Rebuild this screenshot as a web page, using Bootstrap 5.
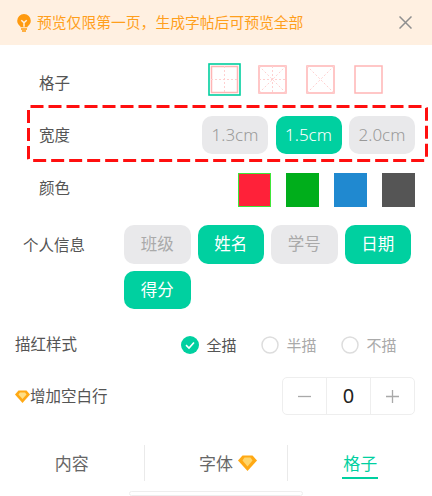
<!DOCTYPE html>
<html lang="zh">
<head>
<meta charset="utf-8">
<title>格子</title>
<link href="https://cdn.jsdelivr.net/npm/bootstrap@5.3.0/dist/css/bootstrap.min.css" rel="stylesheet">
<style>
html,body{height:496px;overflow:hidden}
body{font-family:"Noto Sans","Noto Sans CJK SC",sans-serif;color:#555;background:#fff;font-size:15.5px}
.notice-bar{height:45px;background:#fff0e1;color:#ff9f1c;font-size:14.8px;padding:0 20px 0 17px}
.notice-text{margin-left:6px;white-space:nowrap}
.row-label{line-height:20px;white-space:nowrap}
.grid-row{height:60px;padding:18px 0 0 39px}
.grid-row .row-label{margin-top:10px}
.thumbs{margin-left:138px;align-self:flex-start;align-items:center}
.thumb-cell{width:29px;height:29px;display:block;margin-left:19px}
.thumb-second{margin-left:17px}
.width-box{width:401px;height:57px;margin-left:27px;padding:3px 13px 0 12px}
.dash-frame{position:absolute;left:0;top:0;width:401px;height:57px;pointer-events:none}
.chip{--bs-btn-padding-x:0;--bs-btn-padding-y:0;--bs-btn-border-width:0;width:66px;height:38px;line-height:38px;border-radius:10px;font-size:16.5px;background:#e9e9eb;color:#aaa}
.chip-w{font-size:17px;font-weight:300;color:#999}
.chip:hover{background:#e9e9eb;color:#aaa}
.chip-on,.chip-on:hover{background:#00d0a0;color:#fff}
.width-set{gap:7.5px}
.color-row{height:34px;margin-top:11px;padding:0 17px 0 39px}
.color-row .row-label{margin-top:-4px}
.color-set{gap:15px}
.color-swatch{width:33px;height:34px}
.swatch-picked{border:1.5px solid #3fe53a}
.info-row{margin-top:18px;padding-left:23px;align-items:flex-start}
.info-row .row-label{width:101px;margin-top:10px}
.chip-wrap{gap:7px;width:290px}
.chip-i{width:66.5px;height:38.5px}
.style-row{margin-top:27px;height:18px;padding-left:15px}
.style-row>.row-label{margin-top:-2px}
.radio-set{margin-left:104px}
.radio-item{display:flex;align-items:center;gap:7.5px;color:#aaa;font-size:15px;width:80px}
.radio-item svg{flex:none}
.radio-on{color:#555}
.line-row{margin-top:23px;height:38px;padding:0 17px 0 15px}
.stepper{width:133px;height:38px;border:1px solid #eee;border-radius:5px}
.step-btn{width:43px}
.step-val{flex:1;text-align:center;color:#222;font-size:20px;line-height:36px;border-left:1px solid #eee;border-right:1px solid #eee}
.tab-row{margin-top:30px;height:36px}
.tab-col{width:144px;height:36px;text-align:center;position:relative;font-size:17px;color:#666;line-height:38px}
.tab-mid{border-left:1px solid #eaeaea;border-right:1px solid #eaeaea;width:145px}
.tab-on{color:#00d0a0}
.tab-on .tab-word{display:inline-block;border-bottom:2.5px solid #00d0a0;line-height:24px;padding:0 1px;margin-top:7px;height:27px}
.tab-gem{position:absolute;left:93px;top:10px}
.home-bar{width:174px;height:5px;margin:10px 0 0 129px;border:1px solid #eee;border-radius:3px}
</style>
</head>
<body>
<div class="notice-bar d-flex align-items-center">
  <svg width="14" height="18" viewBox="0 0 14 18"><path d="M7 0a6.800 6.800 0 0 0-6.800 6.800c0 2.500 1.300 4 2.700 5.200.5.400.6.800.6 1.300h7c0-.5.100-.9.600-1.300 1.400-1.200 2.700-2.700 2.700-5.200A6.800 6.800 0 0 0 7 0z" fill="#ff9a0f"/><path d="M4.300 6.200 7 8.800l2.700-2.600M7 8.800v4" fill="none" stroke="#fff0e1" stroke-width="1.500"/><path d="M4 15h6M5 17h4" stroke="#ff9a0f" stroke-width="1.300"/></svg>
  <span class="notice-text">预览仅限第一页，生成字帖后可预览全部</span>
  <svg class="ms-auto" width="13" height="13" viewBox="0 0 13 13"><path d="M.5.500l12 12M12.500.500l-12 12" stroke="#8f8f8f" stroke-width="1.500" fill="none"/></svg>
</div>

<div class="grid-row d-flex">
  <div class="row-label">格子</div>
  <div class="thumbs d-flex">
    <svg width="33" height="33" viewBox="0 0 33 33"><rect x="1" y="1" width="31" height="31" fill="none" stroke="#00cf9f" stroke-width="1.600"/><rect x="3.500" y="3.500" width="26" height="26" fill="none" stroke="#ffb5b5" stroke-width="1.500"/><path d="M16.500 3v27M3 16.500h27" stroke="#ffd0d0" stroke-dasharray="2 2" fill="none"/></svg>
    <svg class="thumb-cell thumb-second" viewBox="0 0 29 29"><rect x="1" y="1" width="27" height="27" fill="none" stroke="#ffb5b5" stroke-width="1.500"/><path d="M14.500 1v27M1 14.500h27M1 1l27 27M28 1 1 28" stroke="#ffd0d0" stroke-dasharray="2 2" fill="none"/></svg>
    <svg class="thumb-cell" viewBox="0 0 29 29"><rect x="1" y="1" width="27" height="27" fill="none" stroke="#ffb5b5" stroke-width="1.500"/><path d="M1 1l27 27M28 1 1 28" stroke="#ffd0d0" stroke-dasharray="2 2" fill="none"/></svg>
    <svg class="thumb-cell" viewBox="0 0 29 29"><rect x="1" y="1" width="27" height="27" fill="none" stroke="#ffb5b5" stroke-width="1.500"/></svg>
  </div>
</div>

<div class="width-box d-flex align-items-center justify-content-between position-relative">
  <div class="row-label">宽度</div>
  <div class="d-flex width-set">
    <button type="button" class="btn chip chip-w">1.3cm</button>
    <button type="button" class="btn chip chip-w chip-on">1.5cm</button>
    <button type="button" class="btn chip chip-w">2.0cm</button>
  </div>
  <svg class="dash-frame" viewBox="0 0 401 57"><rect x="1.500" y="1.500" width="398" height="54" rx="2" fill="none" stroke="#ff0f0f" stroke-width="3" stroke-dasharray="13 5"/></svg>
</div>

<div class="color-row d-flex align-items-center justify-content-between">
  <div class="row-label">颜色</div>
  <div class="d-flex color-set">
    <div class="color-swatch swatch-picked" style="background:#ff2139"></div>
    <div class="color-swatch" style="background:#00ae1b"></div>
    <div class="color-swatch" style="background:#2089d0"></div>
    <div class="color-swatch" style="background:#555"></div>
  </div>
</div>

<div class="info-row d-flex">
  <div class="row-label">个人信息</div>
  <div class="chip-wrap d-flex flex-wrap">
    <button type="button" class="btn chip chip-i">班级</button>
    <button type="button" class="btn chip chip-i chip-on">姓名</button>
    <button type="button" class="btn chip chip-i">学号</button>
    <button type="button" class="btn chip chip-i chip-on">日期</button>
    <button type="button" class="btn chip chip-i chip-on">得分</button>
  </div>
</div>

<div class="style-row d-flex align-items-center">
  <div class="row-label">描红样式</div>
  <div class="radio-set d-flex">
    <div class="radio-item radio-on"><svg width="18" height="18" viewBox="0 0 18 18"><circle cx="9" cy="9" r="9" fill="#00d0a0"/><path d="M5 9.200 8 12l5-5.500" fill="none" stroke="#fff" stroke-width="1.600"/></svg>全描</div>
    <div class="radio-item"><svg width="18" height="18" viewBox="0 0 18 18"><circle cx="9" cy="9" r="8" fill="none" stroke="#ddd" stroke-width="1.500"/></svg>半描</div>
    <div class="radio-item"><svg width="18" height="18" viewBox="0 0 18 18"><circle cx="9" cy="9" r="8" fill="none" stroke="#ddd" stroke-width="1.500"/></svg>不描</div>
  </div>
</div>

<div class="line-row d-flex align-items-center justify-content-between">
  <div class="d-flex align-items-center">
    <svg width="15" height="13" viewBox="0 0 15 13"><path d="M3.500.500h8L15 4.500 7.500 13 0 4.500z" fill="#ffa914"/><path d="M5 2.500h5l1.500 2-4 4.500-4-4.500z" fill="#ffdf85"/></svg>
    <div class="row-label">增加空白行</div>
  </div>
  <div class="stepper d-flex">
    <div class="step-btn d-flex align-items-center justify-content-center"><svg width="13" height="13" viewBox="0 0 13 13"><path d="M0 6.500h13" stroke="#a9a9a9" stroke-width="1.300"/></svg></div>
    <div class="step-val">0</div>
    <div class="step-btn d-flex align-items-center justify-content-center"><svg width="13" height="13" viewBox="0 0 13 13"><path d="M0 6.500h13M6.500 0v13" stroke="#a9a9a9" stroke-width="1.300"/></svg></div>
  </div>
</div>

<div class="tab-row d-flex">
  <div class="tab-col">内容</div>
  <div class="tab-col tab-mid">字体
    <svg class="tab-gem" width="19" height="16" viewBox="0 0 19 16"><path d="M4.500.500h10L19 5.500 9.500 16 0 5.500z" fill="#ffa914"/><path d="M6.500 2.500h6l2 3-5 6-5-6z" fill="#ffd56b"/></svg>
  </div>
  <div class="tab-col tab-on"><span class="tab-word">格子</span></div>
</div>
<div class="home-bar"></div>
</body>
</html>
